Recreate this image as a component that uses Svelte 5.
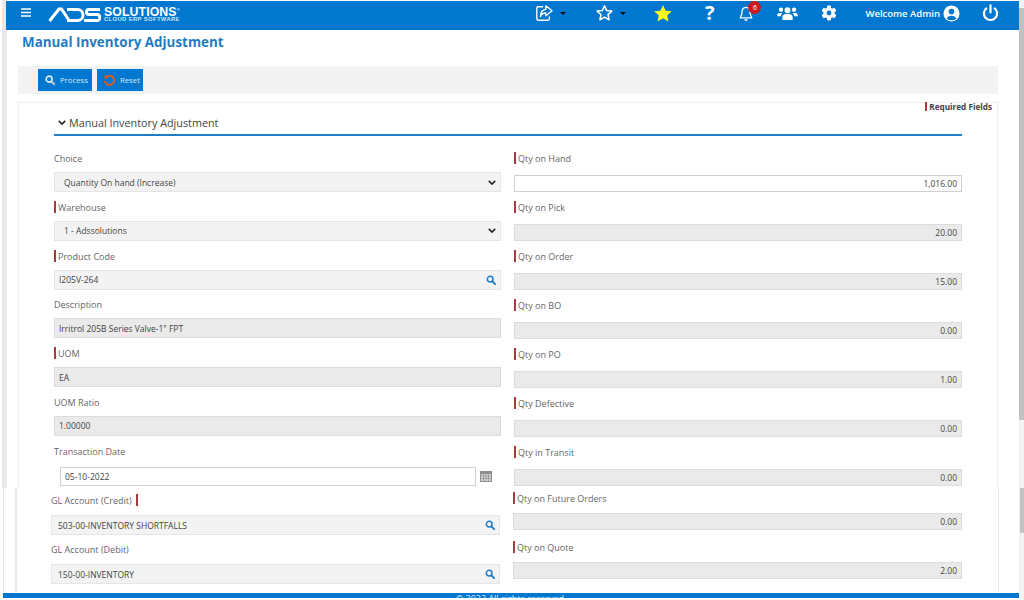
<script lang="ts">
  type Field = { label: string; value: string; kind: string; req: boolean };

  const leftTop: Field[] = [
    { label: 'Choice', value: 'Quantity On hand (Increase)', kind: 'select', req: false },
    { label: 'Warehouse', value: '1 - Adssolutions', kind: 'select', req: true },
    { label: 'Product Code', value: 'I205V-264', kind: 'lookup', req: true },
    { label: 'Description', value: 'Irritrol 205B Series Valve-1" FPT', kind: 'readonly', req: false },
    { label: 'UOM', value: 'EA', kind: 'readonly', req: true },
    { label: 'UOM Ratio', value: '1.00000', kind: 'readonly', req: false },
  ];

  const rightTop: Field[] = [
    { label: 'Qty on Hand', value: '1,016.00', kind: 'input', req: true },
    { label: 'Qty on Pick', value: '20.00', kind: 'readonly', req: true },
    { label: 'Qty on Order', value: '15.00', kind: 'readonly', req: true },
    { label: 'Qty on BO', value: '0.00', kind: 'readonly', req: true },
    { label: 'Qty on PO', value: '1.00', kind: 'readonly', req: true },
    { label: 'Qty Defective', value: '0.00', kind: 'readonly', req: true },
    { label: 'Qty in Transit', value: '0.00', kind: 'readonly', req: true },
  ];

  const rightBottom: Field[] = [
    { label: 'Qty on Future Orders', value: '0.00', kind: 'readonly', req: true },
    { label: 'Qty on Quote', value: '2.00', kind: 'readonly', req: true },
  ];
</script>

{#snippet search()}
  <svg class="search" viewBox="0 0 12 12" width="10" height="10">
    <circle cx="5" cy="5" r="3.4" fill="none" stroke="#1c7cc7" stroke-width="1.8" />
    <path d="M7.6 7.6L11 11" stroke="#1c7cc7" stroke-width="2.2" stroke-linecap="round" />
  </svg>
{/snippet}

{#snippet chevron()}
  <svg class="chev" viewBox="0 0 10 6" width="8" height="5">
    <path d="M1 1l4 4 4-4" fill="none" stroke="#222" stroke-width="1.9" />
  </svg>
{/snippet}

<div class="page">
  <div class="strip"></div>
  <header class="topbar">
    <div class="brand">
      <svg class="burger" viewBox="0 0 10 9" width="10" height="9">
        <path d="M0 1h10M0 4.500h10M0 8h10" stroke="#fff" stroke-width="1.6" />
      </svg>
      <svg class="logo" viewBox="0 0 53 15" width="53" height="15">
        <path d="M1.500 14L11 2h2.500l8 12" fill="none" stroke="#fff" stroke-width="3" />
        <path d="M19 2.500h10.500a5.500 5.500 0 0 1 0 11H19" fill="none" stroke="#fff" stroke-width="3" />
        <path d="M52 2.500H41a2.500 2.500 0 0 0 0 5h8a3 3 0 0 1 0 6H36" fill="none" stroke="#fff" stroke-width="3" />
      </svg>
      <div class="logotext">
        <span class="sol">SOLUTIONS<sup>®</sup></span>
        <span class="erp">CLOUD ERP SOFTWARE</span>
      </div>
    </div>
    <div class="tools">
      <div class="tool share">
        <svg viewBox="0 0 20 20" width="20" height="18">
          <path d="M9 3H3.500A1.500 1.500 0 0 0 2 4.500v12A1.500 1.500 0 0 0 3.500 18h11a1.500 1.500 0 0 0 1.500-1.500V14" fill="none" stroke="#fff" stroke-width="1.500" />
          <path d="M12 2l7 5.500-7 5.500V10c-3 0-5 1-6 4 0-5 2-7.500 6-8z" fill="none" stroke="#fff" stroke-width="1.500" stroke-linejoin="round" />
        </svg>
        <i class="caret"></i>
      </div>
      <div class="tool fav">
        <svg viewBox="0 0 20 20" width="19" height="18">
          <path d="M10 2l2.400 5.300 5.800.6-4.300 3.900 1.200 5.700L10 14.600l-5.100 2.900 1.200-5.700L1.800 7.900l5.800-.6z" fill="none" stroke="#fff" stroke-width="1.700" stroke-linejoin="round" />
        </svg>
        <i class="caret"></i>
      </div>
      <svg class="yellow" viewBox="0 0 20 20" width="20" height="19">
        <path d="M10 1l2.800 6 6.400.7-4.800 4.300 1.400 6.400L10 15.100l-5.800 3.300 1.400-6.400L.8 7.700 7.200 7z" fill="#ffff1a" />
      </svg>
      <span class="help">?</span>
      <div class="bell">
        <svg viewBox="0 0 16 18" width="14" height="17">
          <path d="M8 2a4.500 4.500 0 0 0-4.500 4.500c0 5-2 6-2 7.500h13c0-1.500-2-2.500-2-7.500A4.500 4.500 0 0 0 8 2z" fill="none" stroke="#fff" stroke-width="1.500" />
          <path d="M6 15.500a2 2 0 0 0 4 0z" fill="#fff" />
        </svg>
        <span class="badge">6</span>
      </div>
      <svg class="users" viewBox="0 0 22 16" width="21" height="15">
        <circle cx="11" cy="4.500" r="3.200" fill="#fff" />
        <circle cx="4" cy="4" r="2.300" fill="#fff" />
        <circle cx="18" cy="4" r="2.300" fill="#fff" />
        <path d="M5.500 15v-2.500A4 4 0 0 1 9.500 8.500h3a4 4 0 0 1 4 4V15z" fill="#fff" />
        <path d="M0 11V9.500A2.500 2.500 0 0 1 2.500 7.500H5.500A5 5 0 0 0 4 11zM22 11V9.500a2.500 2.500 0 0 0-2.500-2H16.500A5 5 0 0 1 18 11z" fill="#fff" />
      </svg>
      <svg class="gear" viewBox="0 0 16 16" width="16" height="16">
        <circle cx="8" cy="8" r="5.600" fill="#fff" />
        <g fill="#fff">
          <rect x="6" y="0.500" width="4" height="15" rx="1" />
          <rect x="6" y="0.500" width="4" height="15" rx="1" transform="rotate(60 8 8)" />
          <rect x="6" y="0.500" width="4" height="15" rx="1" transform="rotate(120 8 8)" />
        </g>
        <circle cx="8" cy="8" r="2.400" fill="#0078cf" />
      </svg>
      <span class="welcome">Welcome Admin</span>
      <svg class="user" viewBox="0 0 18 18" width="17" height="17">
        <circle cx="9" cy="9" r="8.500" fill="#fff" />
        <circle cx="9" cy="7" r="3" fill="#0078cf" />
        <path d="M3.600 14.200A6 6 0 0 1 9 11.500a6 6 0 0 1 5.400 2.700A7 7 0 0 1 9 16a7 7 0 0 1-5.400-1.800z" fill="#0078cf" />
      </svg>
      <svg class="power" viewBox="0 0 18 18" width="17" height="18">
        <path d="M5.200 3.500a7 7 0 1 0 7.600 0" fill="none" stroke="#fff" stroke-width="2.300" />
        <path d="M9 1v7.500" stroke="#fff" stroke-width="2.300" stroke-linecap="round" />
      </svg>
    </div>
  </header>

  <main class="content">
    <h1>Manual Inventory Adjustment</h1>

    <div class="toolbar">
      <button type="button" class="btn">
        <svg viewBox="0 0 12 12" width="11" height="11">
          <circle cx="4.500" cy="4.500" r="3.200" fill="none" stroke="#dfe8ef" stroke-width="1.800" />
          <path d="M7 7l3.500 3.500" stroke="#c9c9c9" stroke-width="2.200" />
        </svg>
        Process
      </button>
      <button type="button" class="btn reset">
        <svg viewBox="0 0 14 14" width="13" height="13">
          <path d="M3 3.800A5 5 0 1 1 2 7.500" fill="none" stroke="#e2571e" stroke-width="2" />
          <path d="M0.500 2.500l4.500-.5-.8 4.200z" fill="#e2571e" />
        </svg>
        Reset
      </button>
    </div>

    <section class="panel">
      <div class="required"><i class="mark"></i>Required Fields</div>
      <div class="section-title">
        {@render chevron()}
        <span>Manual Inventory Adjustment</span>
      </div>

      <div class="columns">
        <div class="col left">
          {#each leftTop as f}
            <div class="field">
              <div class="label">
                {#if f.req}<i class="mark"></i>{/if}{f.label}
              </div>
              <div class="box {f.kind}">
                <span>{f.value}</span>
                {#if f.kind === 'select'}{@render chevron()}{/if}
                {#if f.kind === 'lookup'}{@render search()}{/if}
              </div>
            </div>
          {/each}
          <div class="field date">
            <div class="label">Transaction Date</div>
            <div class="date-row">
              <div class="box input"><span>05-10-2022</span></div>
              <svg viewBox="0 0 12 11" width="12" height="11">
                <rect width="12" height="11" fill="#8d8d8d" />
                <rect x="1" y="3" width="10" height="7" fill="#d8d8d8" />
                <path d="M1 5h10M1 7.500h10M3.500 3v7M6 3v7M8.500 3v7" stroke="#8d8d8d" stroke-width=".7" />
              </svg>
            </div>
          </div>
        </div>

        <div class="col right">
          {#each rightTop as f}
            <div class="field">
              <div class="label">
                {#if f.req}<i class="mark"></i>{/if}{f.label}
              </div>
              <div class="box {f.kind} num"><span>{f.value}</span></div>
            </div>
          {/each}
        </div>
      </div>
    </section>

    <!-- lower rows sit a few pixels left of the panel above -->
    <section class="lower">
      <div class="columns">
        <div class="col left">
          <div class="field">
            <div class="label">GL Account (Credit) <i class="mark after"></i></div>
            <div class="box lookup"><span>503-00-INVENTORY SHORTFALLS</span>{@render search()}</div>
          </div>
          <div class="field">
            <div class="label">GL Account (Debit)</div>
            <div class="box lookup"><span>150-00-INVENTORY</span>{@render search()}</div>
          </div>
        </div>
        <div class="col right">
          {#each rightBottom as f}
            <div class="field">
              <div class="label"><i class="mark"></i>{f.label}</div>
              <div class="box readonly num"><span>{f.value}</span></div>
            </div>
          {/each}
        </div>
      </div>
    </section>
  </main>

  <footer class="footer">© 2022 All rights reserved.</footer>
  <div class="scrollbar"><i></i><i class="second"></i></div>
</div>

<style>
  :global(body) {
    margin: 0;
    background: #fff;
  }
  .page {
    position: relative;
    width: 1024px;
    height: 600px;
    overflow: hidden;
    font-family: 'Open Sans', sans-serif;
    font-size: 9px;
    color: #555;
  }
  .strip {
    position: absolute;
    left: 2px;
    top: 0;
    width: 5px;
    height: 488px;
    background: #e8e8e8;
  }
  .topbar {
    position: relative;
    display: flex;
    justify-content: space-between;
    align-items: center;
    height: 29px;
    margin: 1px 5px 0 6px;
    padding: 0 0 5px 15px;
    box-sizing: border-box;
    background: #0078cf;
    color: #fff;
  }
  .brand {
    display: flex;
    align-items: flex-start;
    margin-top: 2px;
  }
  .burger {
    margin: 2px 17px 0 0;
  }
  .logo {
    margin-right: 3px;
    margin-top: 1px;
  }
  .logotext {
    display: flex;
    flex-direction: column;
    margin-top: 1px;
  }
  .sol {
    font: 700 12.300px/10px 'Liberation Sans', sans-serif;
    letter-spacing: 0.1px;
  }
  .sol sup {
    font-size: 4px;
    line-height: 0;
  }
  .erp {
    font: 700 5.900px/5px 'Liberation Sans', sans-serif;
    letter-spacing: 0.35px;
    color: #cfe4f5;
  }
  .tools {
    display: flex;
    align-items: center;
    padding-right: 20px;
  }
  .tool {
    display: flex;
    align-items: center;
    gap: 6px;
  }
  .share {
    margin-right: 29px;
  }
  .fav {
    margin-right: 27px;
  }
  .caret {
    width: 0;
    height: 0;
    border: 3px solid transparent;
    border-top-color: #111;
    border-bottom: 0;
  }
  .yellow {
    margin-right: 32px;
  }
  .help {
    font: bold 20px/20px 'Open Sans', sans-serif;
    margin-right: 25px;
  }
  .bell {
    position: relative;
    display: flex;
    margin-right: 24px;
  }
  .badge {
    position: absolute;
    left: 9px;
    top: -4px;
    width: 13px;
    height: 13px;
    border-radius: 50%;
    background: #cc1a1a;
    font-size: 7px;
    line-height: 13px;
    text-align: center;
    color: #fff;
  }
  .users {
    margin-right: 23px;
  }
  .gear {
    margin-right: 28px;
  }
  .welcome {
    font-size: 9.500px;
    font-weight: 600;
    margin-right: 3px;
  }
  .power {
    margin-left: 22px;
  }

  h1 {
    margin: 3px 0 0 22px;
    font-size: 13.400px;
    line-height: 18px;
    font-weight: 700;
    color: #1f7cc4;
  }
  .toolbar {
    display: flex;
    gap: 5px;
    height: 28px;
    margin: 15px 26px 0 18px;
    padding: 3px 0 0 20px;
    box-sizing: border-box;
    background: #f2f2f2;
  }
  .btn {
    display: flex;
    align-items: center;
    justify-content: space-between;
    width: 54px;
    height: 22px;
    padding: 0 4px 0 7px;
    box-sizing: border-box;
    border: 0;
    background: #0078cf;
    color: #d6e7f5;
    font: 7.800px 'Open Sans', sans-serif;
  }
  .reset {
    width: 46px;
    padding: 0 3px 0 6px;
  }
  .panel {
    position: relative;
    height: 386px;
    margin: 8px 26px 0 18px;
    border: solid #eee;
    border-width: 1px 1px 0 1px;
    box-sizing: border-box;
    padding: 0 35px;
  }
  .required {
    position: absolute;
    right: 5px;
    top: -1px;
    font-size: 8.200px;
    font-weight: 700;
    color: #444;
    line-height: 9px;
  }
  .mark {
    display: inline-block;
    width: 2px;
    height: 12px;
    margin-right: 2px;
    vertical-align: -2px;
    background: #a83a3f;
  }
  .mark.after {
    margin: 0 0 0 2px;
  }
  .required .mark {
    height: 9px;
    vertical-align: -1px;
  }
  .section-title {
    display: flex;
    align-items: center;
    gap: 3px;
    height: 33px;
    padding: 4px 0 0 4px;
    box-sizing: border-box;
    border-bottom: 2px solid #1f7cc4;
    font-size: 10.800px;
    color: #444;
    margin-bottom: 16px;
  }
  .section-title span {
    padding-top: 4px;
  }
  .section-title .chev {
    margin-top: 3px;
  }
  .columns {
    display: flex;
    gap: 13px;
  }
  .col {
    display: flex;
    flex-direction: column;
  }
  .panel .left {
    width: 447px;
  }
  .panel .left .field {
    height: 48.750px;
  }
  .panel .right {
    width: 448px;
  }
  .field {
    height: 49px;
  }
  .label {
    height: 14px;
    line-height: 14px;
    color: #666;
  }
  .box {
    display: flex;
    align-items: center;
    justify-content: space-between;
    height: 20px;
    margin-top: 6px;
    box-sizing: border-box;
    border: 1px solid #e6e6e6;
    background: #f3f3f3;
    color: #444;
    font-size: 8.500px;
    padding: 0 4px;
  }
  .select {
    padding-left: 9px;
  }
  .readonly {
    background: #eaeaea;
    border-color: #dcdcdc;
  }
  .right .box {
    height: 17px;
    margin-top: 9px;
  }
  .num {
    justify-content: flex-end;
  }
  .input {
    background: #fff;
    border-color: #cfcfcf;
  }
  .date .date-row {
    display: flex;
    align-items: center;
    gap: 4px;
    margin-top: 8px;
    padding-left: 6px;
  }
  .date-row .box {
    flex: 1;
    height: 19px;
    margin-top: 0;
  }
  .date-row svg {
    margin-right: 9px;
  }
  .lower {
    margin: 0 25px 0 15px;
    padding: 6px 0 0 34px;
    border: solid #e8e8e8;
    border-width: 0 1px 0 2px;
    height: 105px;
    box-sizing: border-box;
  }
  .lower::before {
    content: '';
    position: absolute;
    left: 3px;
    top: 488px;
    width: 1px;
    height: 105px;
    background: #e8e8e8;
  }
  .lower .left {
    width: 449px;
  }
  .lower .right {
    width: 449px;
    margin-top: -2px;
  }
  .lower .left .box {
    margin-top: 7px;
    padding-left: 6px;
  }
  .lower .right .box {
    margin-top: 7px;
  }
  .footer {
    position: absolute;
    left: 3px;
    width: 1016px;
    top: 593px;
    height: 5px;
    background: #0078cf;
    color: #d8e9f6;
    font-size: 9px;
    line-height: 12px;
    text-align: center;
    overflow: hidden;
  }
  .scrollbar {
    position: absolute;
    top: 0;
    right: 0;
    width: 5px;
    height: 600px;
    background: #f3f3f3;
  }
  .scrollbar i {
    display: block;
    margin-top: 8px;
    height: 412px;
    background: #c2c2c2;
  }
  .scrollbar .second {
    margin: 68px 0 0 1px;
    height: 45px;
  }
</style>
